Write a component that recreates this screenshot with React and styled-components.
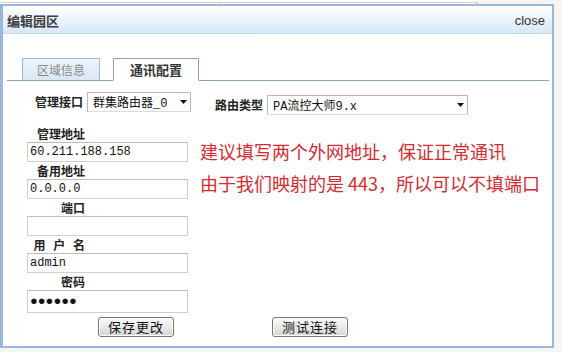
import React from "react";
import styled, { createGlobalStyle } from "styled-components";

const GlobalStyle = createGlobalStyle`
  html, body {
    margin: 0;
    padding: 0;
    background: #f6f5f1;
  }
  body {
    font-family: "Noto Sans CJK SC", "Liberation Sans", sans-serif;
    width: 562px;
    height: 352px;
    overflow: hidden;
  }
`;

const Backdrop = styled.div`
  width: 562px;
  height: 352px;
`;

const PageStrip = styled.div`
  width: 478px;
  height: 4px;
  background: #fdfdfd;
  border-top: 2px solid #fff;
  box-sizing: border-box;
  position: relative;
  &::after {
    content: "";
    display: block;
    height: 1px;
    background: #e4cfd2;
  }
`;

const Tick = styled.span`
  position: absolute;
  top: 0;
  left: ${p => p.x}px;
  width: 1px;
  height: 4px;
  background: #c9b9ba;
`;

const Dialog = styled.div`
  width: 554px;
  height: 344px;
  box-sizing: border-box;
  border: 2px solid #9ab6dc;
  border-left-width: 3px;
  background: #fff;
  display: flex;
  flex-direction: column;
`;

const TitleBar = styled.div`
  height: 27px;
  display: flex;
  align-items: center;
  justify-content: space-between;
  padding: 0 7px 0 4px;
  background: linear-gradient(#ffffff, #e9f2fb 55%, #d7e7f7);
  border-bottom: 1px solid #c6daef;
`;

const Title = styled.span`
  font-size: 13px;
  font-weight: 700;
  color: #3c3c3c;
  margin-top: 1px;
`;

const Close = styled.span`
  font-family: "Liberation Sans", Arial, sans-serif;
  font-size: 13px;
  color: #333;
  margin-top: 1px;
`;

const TabBar = styled.div`
  display: flex;
  gap: 13px;
  margin: 24px 3px 0 4px;
  padding-left: 15px;
  border-bottom: 1px solid #8aa3c4;
`;

const Tab = styled.div`
  width: ${p => p.w}px;
  height: 23px;
  box-sizing: border-box;
  margin-bottom: -1px;
  display: flex;
  align-items: center;
  justify-content: center;
  font-size: ${p => (p.active ? 13 : 12)}px;
  font-weight: ${p => (p.active ? 700 : 400)};
  color: ${p => (p.active ? "#333" : "#8a8a8a")};
  border: 1px solid ${p => (p.active ? "#8aa3c4" : "#a4b8d2")};
  border-bottom-color: ${p => (p.active ? "#fff" : "#8aa3c4")};
  background: ${p =>
    p.active ? "#fff" : "linear-gradient(#eef4fb, #d9e6f4)"};
`;

const Form = styled.div`
  padding: 11px 0 0 24px;
`;

const TopRow = styled.div`
  display: flex;
  align-items: flex-start;
  margin-left: 8px;
`;

const InlineLabel = styled.span`
  font-size: 12px;
  font-weight: 700;
  color: #222;
  line-height: 20px;
  margin: ${p => p.drop || 0}px 4px 0 ${p => p.gap || 0}px;
`;

const Select = styled.div`
  width: ${p => p.w}px;
  height: 20px;
  margin-top: ${p => p.drop || 0}px;
  box-sizing: border-box;
  border: 1px solid #b4b9c1;
  border-bottom-color: #d8dbdf;
  background: #fff;
  display: flex;
  align-items: center;
  justify-content: space-between;
  padding: 0 3px 0 5px;
  font-family: "Liberation Mono", "Noto Sans CJK SC", monospace;
  font-size: 12px;
  color: #111;
`;

const Arrow = () => (
  <svg width="7" height="4" viewBox="0 0 7 4">
    <path d="M0 0h7L3.5 4z" fill="#111" />
  </svg>
);

const Columns = styled.div`
  display: flex;
  gap: 12px;
  margin-top: 10px;
`;

const FieldColumn = styled.div`
  width: 161px;
  display: flex;
  flex-direction: column;
`;

const FieldLabel = styled.div`
  width: 58px;
  height: 17px;
  line-height: 17px;
  text-align: right;
  font-size: 12px;
  font-weight: 700;
  color: #222;
  word-spacing: 5px;
`;

const Field = styled.input`
  width: 161px;
  height: ${p => p.h || 20}px;
  box-sizing: border-box;
  margin: 0;
  padding: 0 2px;
  border: 1px solid #cfcfcf;
  border-top-color: #bdbdbd;
  background: #fff;
  font-family: "Liberation Mono", monospace;
  font-size: ${p => p.fs || 12}px;
  color: #111;
  outline: none;
`;

const Notice = styled.div`
  margin-top: 10px;
  font-size: 18px;
  line-height: 32px;
  color: #d52a30;
  white-space: nowrap;
`;

const Actions = styled.div`
  display: flex;
  gap: 98px;
  margin: 4px 0 0 71px;
`;

const Button = styled.button`
  width: 76px;
  height: 20px;
  padding: 0;
  box-sizing: border-box;
  border: 1px solid #777;
  border-radius: 3px;
  background: linear-gradient(#fbfbfb, #e9e9e9 50%, #d4d4d4);
  box-shadow: inset 0 0 0 1px #fff;
  font-family: "Noto Sans CJK SC", sans-serif;
  font-size: 13px;
  letter-spacing: 1px;
  line-height: 18px;
  color: #111;
`;

const fields = [
  { label: "管理地址", value: "60.211.188.158" },
  { label: "备用地址", value: "0.0.0.0" },
  { label: "端口", value: "" },
  { label: "用 户 名", value: "admin" },
  { label: "密码", value: "●●●●●●", h: 23, fs: 13 },
];

export default function App() {
  return (
    <Backdrop>
      <GlobalStyle />
      <PageStrip>
        <Tick x={221} />
        <Tick x={476} />
      </PageStrip>
      <Dialog>
        <TitleBar>
          <Title>编辑园区</Title>
          <Close>close</Close>
        </TitleBar>
        <TabBar>
          <Tab w={78}>区域信息</Tab>
          <Tab w={86} active>通讯配置</Tab>
        </TabBar>
        <Form>
          <TopRow>
            <InlineLabel>管理接口</InlineLabel>
            <Select w={104}>
              <span>群集路由器_0</span>
              <Arrow />
            </Select>
            <InlineLabel gap={24} drop={3}>路由类型</InlineLabel>
            <Select w={201} drop={3}>
              <span>PA流控大师9.x</span>
              <Arrow />
            </Select>
          </TopRow>
          <Columns>
            <FieldColumn>
              {fields.map(f => (
                <React.Fragment key={f.label}>
                  <FieldLabel>{f.label}</FieldLabel>
                  <Field h={f.h} fs={f.fs} defaultValue={f.value} readOnly />
                </React.Fragment>
              ))}
            </FieldColumn>
            <Notice>
              建议填写两个外网地址，保证正常通讯
              <br />
              由于我们映射的是 443，所以可以不填端口
            </Notice>
          </Columns>
          <Actions>
            <Button>保存更改</Button>
            <Button>测试连接</Button>
          </Actions>
        </Form>
      </Dialog>
    </Backdrop>
  );
}
